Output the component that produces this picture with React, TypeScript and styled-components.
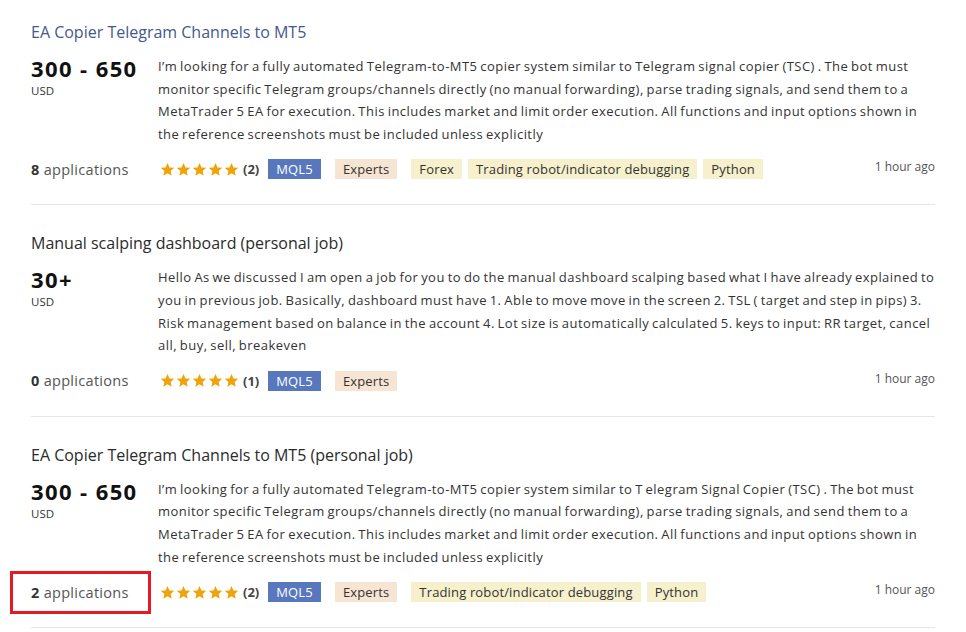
import styled, { createGlobalStyle } from 'styled-components';

const GlobalStyle = createGlobalStyle`
  body {
    margin: 0;
    background: #ffffff;
    font-family: "Open Sans", "Liberation Sans", Arial, sans-serif;
    color: #333333;
  }
`;

interface Job {
  title: string;
  visited?: boolean;
  price: string;
  text: string;
  applications: number;
  reviews: number;
  tags: { label: string; kind: 'lang' | 'section' | 'category' }[];
  time: string;
  highlight?: boolean;
}

const jobs: Job[] = [
  {
    title: 'EA Copier Telegram Channels to MT5',
    visited: true,
    price: '300 - 650',
    text: 'I’m looking for a fully automated Telegram-to-MT5 copier system similar to Telegram signal copier (TSC) . The bot must monitor specific Telegram groups/channels directly (no manual forwarding), parse trading signals, and send them to a MetaTrader 5 EA for execution. This includes market and limit order execution. All functions and input options shown in the reference screenshots must be included unless explicitly',
    applications: 8,
    reviews: 2,
    tags: [
      { label: 'MQL5', kind: 'lang' },
      { label: 'Experts', kind: 'section' },
      { label: 'Forex', kind: 'category' },
      { label: 'Trading robot/indicator debugging', kind: 'category' },
      { label: 'Python', kind: 'category' },
    ],
    time: '1 hour ago',
  },
  {
    title: 'Manual scalping dashboard (personal job)',
    price: '30+',
    text: 'Hello As we discussed I am open a job for you to do the manual dashboard scalping based what I have already explained to you in previous job. Basically, dashboard must have 1. Able to move move in the screen 2. TSL ( target and step in pips) 3. Risk management based on balance in the account 4. Lot size is automatically calculated 5. keys to input: RR target, cancel all, buy, sell, breakeven',
    applications: 0,
    reviews: 1,
    tags: [
      { label: 'MQL5', kind: 'lang' },
      { label: 'Experts', kind: 'section' },
    ],
    time: '1 hour ago',
  },
  {
    title: 'EA Copier Telegram Channels to MT5 (personal job)',
    price: '300 - 650',
    text: 'I’m looking for a fully automated Telegram-to-MT5 copier system similar to T elegram Signal Copier (TSC) . The bot must monitor specific Telegram groups/channels directly (no manual forwarding), parse trading signals, and send them to a MetaTrader 5 EA for execution. This includes market and limit order execution. All functions and input options shown in the reference screenshots must be included unless explicitly',
    applications: 2,
    reviews: 2,
    tags: [
      { label: 'MQL5', kind: 'lang' },
      { label: 'Experts', kind: 'section' },
      { label: 'Trading robot/indicator debugging', kind: 'category' },
      { label: 'Python', kind: 'category' },
    ],
    time: '1 hour ago',
    highlight: true,
  },
];

function Star() {
  return (
    <svg width="15" height="15" viewBox="0 0 24 24">
      <path
        d="M12 1.5l3.2 7.1 7.6.7-5.8 5.1 1.7 7.6L12 18l-6.7 4 1.7-7.6-5.8-5.1 7.6-.7z"
        fill="#f0a30a"
      />
    </svg>
  );
}

export default function App() {
  return (
    <>
      <GlobalStyle />
      <List>
        {jobs.map((job) => (
          <Item key={job.title}>
            <Title $visited={job.visited}>{job.title}</Title>
            <Body>
              <PriceBox>
                <Price>{job.price}</Price>
                <Currency>USD</Currency>
              </PriceBox>
              <Description>{job.text}</Description>
            </Body>
            <Footer>
              <Applications $highlight={job.highlight}>
                <b>{job.applications}</b> applications
              </Applications>
              <Rating>
                <Stars>
                  {[0, 1, 2, 3, 4].map((i) => (
                    <Star key={i} />
                  ))}
                </Stars>
                <Count>({job.reviews})</Count>
              </Rating>
              <Tags>
                {job.tags.map((t) => (
                  <Tag key={t.label} $kind={t.kind}>
                    {t.label}
                  </Tag>
                ))}
              </Tags>
              <Time>{job.time}</Time>
            </Footer>
          </Item>
        ))}
      </List>
    </>
  );
}

const List = styled.div`
  padding: 20px 31px 0 31px;
  width: 904px;
`;

const Item = styled.div`
  border-bottom: 1px solid #e6e6e6;
  padding-bottom: 20px;
  margin-bottom: 26px;
`;

const Title = styled.div<{ $visited?: boolean }>`
  font-size: 16px;
  line-height: 24px;
  color: ${({ $visited }) => ($visited ? '#45598c' : '#2b2b2b')};
  margin-bottom: 11px;
`;

const Body = styled.div`
  display: flex;
`;

const PriceBox = styled.div`
  width: 127px;
  flex-shrink: 0;
`;

const Price = styled.div`
  font-size: 22px;
  font-weight: bold;
  line-height: 28px;
  color: #111111;
  letter-spacing: 1.4px;
  margin-top: -1px;
`;

const Currency = styled.div`
  font-size: 11.5px;
  line-height: 16px;
  margin-top: 1px;
  color: #333333;
`;

const Description = styled.div`
  width: 780px;
  font-size: 13px;
  line-height: 22.6px;
  letter-spacing: 0.46px;
  word-spacing: -1px;
  color: #333333;
`;

const Footer = styled.div`
  display: flex;
  align-items: center;
  margin-top: 9px;
  height: 30px;
`;

const Applications = styled.div<{ $highlight?: boolean }>`
  position: relative;
  width: 129px;
  flex-shrink: 0;
  font-size: 14.5px;
  letter-spacing: 0.3px;
  color: #555555;
  b {
    color: #333333;
  }
  ${({ $highlight }) =>
    $highlight &&
    `
    &::before {
      content: '';
      position: absolute;
      left: -21px;
      top: -12px;
      width: 135px;
      height: 37px;
      border: 3px solid #e31b23;
    }
  `}
`;

const Rating = styled.div`
  display: flex;
  align-items: center;
  gap: 4px;
  margin-right: 9px;
`;

const Stars = styled.div`
  display: flex;
  gap: 1px;
`;

const Count = styled.span`
  font-size: 13px;
  font-weight: bold;
  color: #444444;
`;

const Tags = styled.div`
  display: flex;
  flex: 1;
`;

const Tag = styled.span<{ $kind: 'lang' | 'section' | 'category' }>`
  font-size: 13px;
  line-height: 20px;
  letter-spacing: 0.15px;
  padding: 0 8px;
  margin-right: ${({ $kind }) => ($kind === 'category' ? '6px' : '14px')};
  color: ${({ $kind }) => ($kind === 'lang' ? '#ffffff' : '#333333')};
  background: ${({ $kind }) =>
    $kind === 'lang' ? '#5877bd' : $kind === 'section' ? '#f7e5d3' : '#f7f0cd'};
`;

const Time = styled.span`
  font-size: 12px;
  color: #555555;
  align-self: flex-start;
  margin-top: 4px;
`;
